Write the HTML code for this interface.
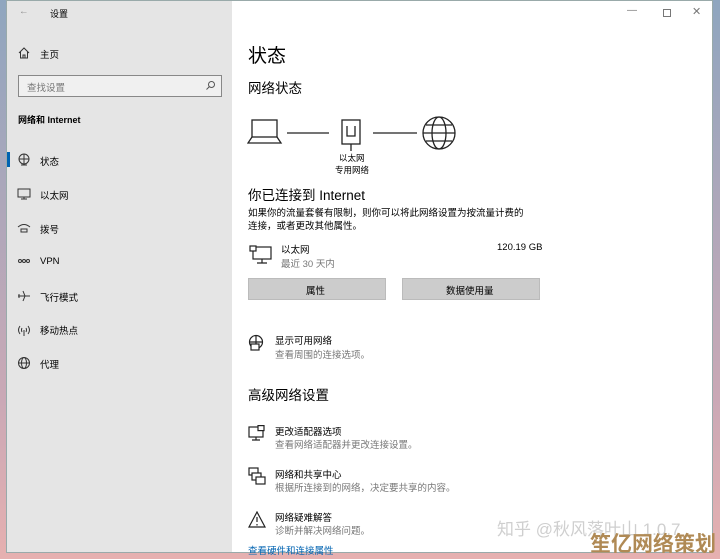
<!DOCTYPE html>
<html><head><meta charset="utf-8"><style>
*{margin:0;padding:0;box-sizing:border-box}
body{width:720px;height:559px;overflow:hidden;background:linear-gradient(#8fa6bf,#c9a8b6 70%,#e6b0b0);font-family:"Liberation Sans","Noto Sans CJK SC",sans-serif;position:relative;color:#000}
.win{position:absolute;left:6px;top:0;width:707px;height:553px;background:#fff;border:1px solid #9aa;}
.side{position:absolute;left:0;top:0;width:225px;height:100%;background:#e5e5e5}
.t{position:absolute;white-space:nowrap}
.s{font-size:9.5px}
.g{color:#777}
.ic{position:absolute;left:10px;width:14px;height:14px}
</style></head><body>
<div class="win">
<div class="side">
<div class="t s" style="left:12px;top:5px;color:#888">←</div>
<div class="t" style="left:43px;top:6px;font-size:9px">设置</div>
<svg class="ic" style="top:45px" viewBox="0 0 14 14" fill="none" stroke="#333"><path d="M2 7L7 2l5 5M3.5 6v6h7V6M6 12V9h2v3"/></svg>
<div class="t s" style="left:33px;top:46px">主页</div>
<div style="position:absolute;left:11px;top:74px;width:204px;height:22px;border:1px solid #888;background:#f0f0f0"></div>
<div class="t s g" style="left:20px;top:79px">查找设置</div>
<svg style="position:absolute;left:198px;top:79px" width="11" height="11" viewBox="0 0 11 11" fill="none" stroke="#555"><circle cx="6.5" cy="4.5" r="3"/><path d="M4.5 6.5L1.5 9.5"/></svg>
<div class="t" style="left:11px;top:112px;font-size:9px;font-weight:bold">网络和 Internet</div>
<div style="position:absolute;left:0;top:151px;width:3px;height:15px;background:#0063b1"></div>
<svg class="ic" style="top:152px" viewBox="0 0 14 14" fill="none" stroke="#333"><circle cx="7" cy="6" r="5"/><path d="M2 6h10M7 1v10M4 12h6"/></svg>
<div class="t s" style="left:33px;top:153px">状态</div>
<svg class="ic" style="top:186px" viewBox="0 0 14 14" fill="none" stroke="#333"><rect x="1" y="2" width="12" height="8"/><path d="M7 10v2M4 12h6"/></svg>
<div class="t s" style="left:33px;top:187px">以太网</div>
<svg class="ic" style="top:220px" viewBox="0 0 14 14" fill="none" stroke="#333"><path d="M1 6q6-5 12 0M4 8h6v3H4z"/></svg>
<div class="t s" style="left:33px;top:221px">拨号</div>
<svg class="ic" style="top:254px" viewBox="0 0 14 14" fill="none" stroke="#333"><circle cx="3" cy="6" r="1.5"/><circle cx="7" cy="6" r="1.5"/><circle cx="11" cy="6" r="1.5"/></svg>
<div class="t s" style="left:33px;top:255px">VPN</div>
<svg class="ic" style="top:288px" viewBox="0 0 14 14" fill="none" stroke="#333"><path d="M1 7h12M6 2l2 5-2 5M2 5v4"/></svg>
<div class="t s" style="left:33px;top:289px">飞行模式</div>
<svg class="ic" style="top:322px" viewBox="0 0 14 14" fill="none" stroke="#333"><path d="M3 3q-3 4 0 8M11 3q3 4 0 8M5 5q-1 2 0 4M9 5q1 2 0 4M7 7v6"/></svg>
<div class="t s" style="left:33px;top:322px">移动热点</div>
<svg class="ic" style="top:355px" viewBox="0 0 14 14" fill="none" stroke="#333"><circle cx="7" cy="7" r="5.5"/><ellipse cx="7" cy="7" rx="2.5" ry="5.5"/><path d="M1.5 7h11"/></svg>
<div class="t s" style="left:33px;top:356px">代理</div>
</div>
<div class="t" style="left:620px;top:4px;font-size:10px;color:#777">—</div>
<div style="position:absolute;left:656px;top:8px;width:8px;height:8px;border:1px solid #777"></div>
<div class="t" style="left:685px;top:4px;font-size:11px;color:#777">✕</div>
<div class="t" style="left:241px;top:40px;font-size:19px">状态</div>
<div class="t" style="left:241px;top:76px;font-size:13.5px">网络状态</div>
<svg style="position:absolute;left:240px;top:113px" width="220" height="40" viewBox="0 0 220 40" fill="none" stroke="#222" stroke-width="1.3"><rect x="5" y="6" width="25" height="17"/><path d="M5 23l-4 6h33l-4-6"/><path d="M40 19h42M126 19h44"/><rect x="95" y="6" width="18" height="24"/><path d="M100 12v10h8V12M104 30v7"/><circle cx="192" cy="19" r="16"/><ellipse cx="192" cy="19" rx="7" ry="16"/><path d="M176 19h32M179 11h26M179 27h26"/></svg>
<div class="t" style="left:332px;top:151px;font-size:8.5px">以太网</div>
<div class="t" style="left:328px;top:163px;font-size:8.5px">专用网络</div>
<div class="t" style="left:241px;top:183px;font-size:13.5px">你已连接到 Internet</div>
<div class="t s" style="left:241px;top:204px">如果你的流量套餐有限制，则你可以将此网络设置为按流量计费的</div>
<div class="t s" style="left:241px;top:217px">连接，或者更改其他属性。</div>
<svg style="position:absolute;left:242px;top:244px" width="24" height="20" viewBox="0 0 24 20" fill="none" stroke="#222" stroke-width="1.2"><rect x="4" y="2" width="18" height="12"/><rect x="1" y="1" width="6" height="5" fill="#fff"/><path d="M13 14v4M8 18h10"/></svg>
<div class="t s" style="left:274px;top:241px">以太网</div>
<div class="t s g" style="left:274px;top:255px">最近 30 天内</div>
<div class="t s" style="left:490px;top:241px">120.19 GB</div>
<div style="position:absolute;left:241px;top:277px;width:138px;height:22px;background:#ccc;border:1px solid #bbb"></div>
<div class="t s" style="left:299px;top:282px">属性</div>
<div style="position:absolute;left:395px;top:277px;width:138px;height:22px;background:#ccc;border:1px solid #bbb"></div>
<div class="t s" style="left:439px;top:282px">数据使用量</div>
<svg style="position:absolute;left:241px;top:333px" width="18" height="18" viewBox="0 0 18 18" fill="none" stroke="#222" stroke-width="1.2"><circle cx="8" cy="8" r="6.5"/><path d="M1.5 8h13M8 1.5v13"/><rect x="3" y="10" width="8" height="6" fill="#fff"/></svg>
<div class="t s" style="left:268px;top:332px">显示可用网络</div>
<div class="t s g" style="left:268px;top:346px">查看周围的连接选项。</div>
<div class="t" style="left:241px;top:383px;font-size:13.5px">高级网络设置</div>
<svg style="position:absolute;left:241px;top:424px" width="18" height="18" viewBox="0 0 18 18" fill="none" stroke="#222" stroke-width="1.2"><rect x="1" y="2" width="14" height="10"/><path d="M8 12v3M4 15h8"/><rect x="10" y="0.6" width="6" height="5" fill="#fff"/></svg>
<div class="t s" style="left:268px;top:423px">更改适配器选项</div>
<div class="t s g" style="left:268px;top:436px">查看网络适配器并更改连接设置。</div>
<svg style="position:absolute;left:241px;top:466px" width="18" height="18" viewBox="0 0 18 18" fill="none" stroke="#222" stroke-width="1.2"><rect x="1" y="1" width="9" height="7"/><rect x="4" y="6" width="9" height="7" fill="#fff"/><rect x="8" y="10" width="9" height="7" fill="#fff"/></svg>
<div class="t s" style="left:268px;top:466px">网络和共享中心</div>
<div class="t s g" style="left:268px;top:479px">根据所连接到的网络，决定要共享的内容。</div>
<svg style="position:absolute;left:241px;top:510px" width="18" height="17" viewBox="0 0 18 17" fill="none" stroke="#222" stroke-width="1.2"><path d="M9 1L1 16h16z M9 6v5M9 13v1.5"/></svg>
<div class="t s" style="left:268px;top:509px">网络疑难解答</div>
<div class="t s g" style="left:268px;top:522px">诊断并解决网络问题。</div>
<div class="t s" style="left:241px;top:542px;color:#0063b1">查看硬件和连接属性</div>
<div class="t" style="left:490px;top:514px;font-size:17px;color:#cfcfcf">知乎 @秋风落叶山 1.0.7</div>
</div>
<div class="t" style="left:590px;top:528px;font-size:21px;font-weight:bold;color:#b08a55">笙亿网络策划</div>
</body></html>
